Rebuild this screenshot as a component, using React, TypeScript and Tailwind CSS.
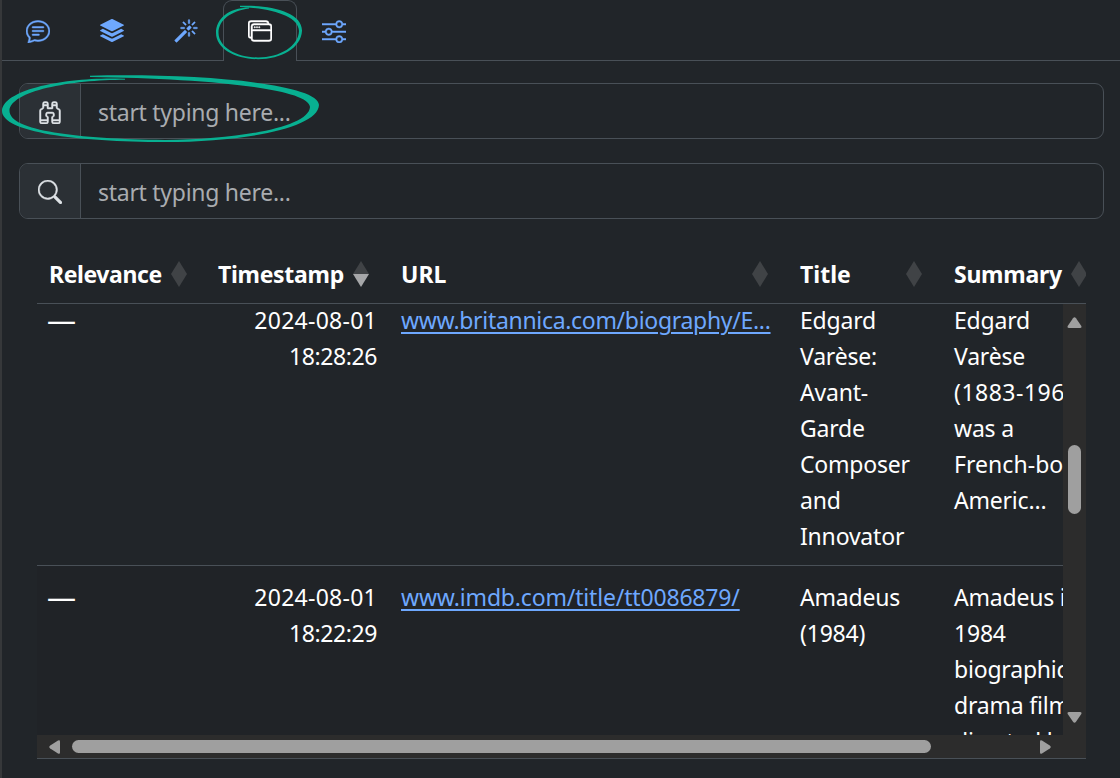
import type { ReactNode } from "react";
import { BsChatText, BsStack, BsMagic, BsWindowStack, BsSliders, BsBinoculars, BsSearch } from "react-icons/bs";

function Tab({ children, active = false }: { children: ReactNode; active?: boolean }) {
  return (
    <div
      className={
        active
          ? "flex h-[61px] w-[74px] items-center justify-center rounded-t-[9px] border border-b-0 border-[#495057] bg-[#212529] text-white"
          : "flex h-[62px] w-[74px] items-center justify-center text-[#6ea8fe]"
      }
    >
      {children}
    </div>
  );
}

function SearchField({ icon }: { icon: ReactNode }) {
  return (
    <div className="flex h-14 overflow-hidden rounded-[9px] border border-[#495057]">
      <div className="flex w-[61px] shrink-0 items-center justify-center border-r border-[#495057] bg-[#2b3035] pt-px text-[#dee2e6]">
        {icon}
      </div>
      <input
        className="min-w-0 flex-1 bg-transparent pl-[17px] pt-[3px] text-[23px] tracking-[-0.28px] outline-none placeholder:text-[#a9acb0]"
        placeholder="start typing here..."
      />
    </div>
  );
}

function SortMark({ desc = false }: { desc?: boolean }) {
  return (
    <svg width="16" height="26" viewBox="0 0 16 26" className="shrink-0">
      <path d="M8 0L16 13H0Z" fill="#404346" />
      <path d="M0 13H16L8 26Z" fill={desc ? "#a6a7a9" : "#404346"} />
    </svg>
  );
}

function Lines({ items }: { items: string[] }) {
  return (
    <>
      {items.map((t) => (
        <div
          key={t}
          className={
            t.startsWith("(1883")
              ? "whitespace-nowrap tracking-[0.5px]"
              : t.startsWith("French")
                ? "whitespace-nowrap tracking-[0.05px]"
                : "whitespace-nowrap"
          }
        >
          {t}
        </div>
      ))}
    </>
  );
}

interface RowData {
  date: string;
  time: string;
  url: string;
  title: string[];
  summary: string[];
}

const rows: RowData[] = [
  {
    date: "2024-08-01",
    time: "18:28:26",
    url: "www.britannica.com/biography/E...",
    title: ["Edgard", "Varèse:", "Avant-", "Garde", "Composer", "and", "Innovator"],
    summary: ["Edgard", "Varèse", "(1883-1965)", "was a", "French-born", "Americ..."],
  },
  {
    date: "2024-08-01",
    time: "18:22:29",
    url: "www.imdb.com/title/tt0086879/",
    title: ["Amadeus", "(1984)"],
    summary: ["Amadeus is a", "1984", "biographical", "drama film", "directed by"],
  },
];

function Row({ row, first }: { row: RowData; first: boolean }) {
  return (
    <div
      className={
        first
          ? "flex h-[262px] shrink-0 border-b border-[#495057]"
          : "flex h-[200px] shrink-0 bg-[#202327] pt-[15px]"
      }
    >
      <div className="-mt-0.5 w-[170px] shrink-0 pl-[10px] text-[29px] tracking-normal">—</div>
      <div className="-mt-0.5 w-[170px] shrink-0 text-right">
        <div className="tracking-[0.26px]">{row.date}</div>
        <div className="tracking-[-0.4px]">{row.time}</div>
      </div>
      <div className="-mt-0.5 w-[399px] shrink-0 whitespace-nowrap pl-6">
        <a
          className={
            first
              ? "tracking-[-0.31px] text-[#6ea8fe] underline decoration-2 underline-offset-[3px]"
              : "tracking-[-0.17px] text-[#6ea8fe] underline decoration-2 underline-offset-[3px]"
          }
        >
          {row.url}
        </a>
      </div>
      <div className="-mt-0.5 w-[154px] shrink-0 pl-6"><Lines items={row.title} /></div>
      <div className="-mt-0.5 w-[200px] shrink-0 pl-6"><Lines items={row.summary} /></div>
    </div>
  );
}

export default function App() {
  return (
    <div className="relative h-[778px] w-[1120px] overflow-hidden border-l-2 border-[#36383a] bg-[#212529] font-['Noto_Sans','Open_Sans',sans-serif] text-white">
      <div className="-ml-px flex h-[61px] border-b border-[#495057]">
        <Tab><BsChatText size={24} strokeWidth={0.3} /></Tab>
        <Tab><BsStack size={24} /></Tab>
        <Tab><BsMagic size={24} strokeWidth={0.3} /></Tab>
        <Tab active><BsWindowStack size={24} strokeWidth={0.3} /></Tab>
        <Tab><BsSliders size={24} strokeWidth={0.3} /></Tab>
      </div>

      <div className="flex flex-col gap-6 pl-[17px] pr-4 pt-[22px]">
        <SearchField icon={<BsBinoculars size={24} strokeWidth={0.3} />} />
        <SearchField icon={<BsSearch size={24} strokeWidth={0.3} />} />
      </div>

      <div className="ml-[35px] mt-[25px] w-[1049px] overflow-hidden">
        <div className="flex h-[60px] w-[1100px] items-center border-b border-[#495057] text-[23px] font-bold">
          <div className="flex w-[170px] items-center pl-3">
            <span className="w-[122px] pt-0.5 tracking-[-0.4px]">Relevance</span><SortMark />
          </div>
          <div className="flex w-[170px] items-center pl-[11px]">
            <span className="w-[135px] pt-0.5 tracking-[-0.3px]">Timestamp</span><SortMark desc />
          </div>
          <div className="flex w-[399px] items-center pl-6">
            <span className="w-[351px] pt-0.5">URL</span><SortMark />
          </div>
          <div className="flex w-[154px] items-center pl-6">
            <span className="w-[106px] pt-0.5">Title</span><SortMark />
          </div>
          <div className="flex items-center pl-6">
            <span className="w-[117px] pt-0.5 tracking-[-0.25px]">Summary</span><SortMark />
          </div>
        </div>
        <div className="flex h-[431px]">
          <div className="flex w-[1026px] flex-col overflow-hidden text-[23px] leading-9 tracking-[-0.2px]">
            {rows.map((r, i) => <Row key={r.url} row={r} first={i === 0} />)}
          </div>
          <div className="flex w-[23px] flex-col items-center bg-[#2c2c2c]">
            <svg width="15" height="11" viewBox="0 0 15 11" className="mt-[13px]">
              <path d="M6 1.200Q7.500-.7 9 1.200L14.300 9Q15 11 13 11H2Q0 11 .7 9Z" fill="#9f9f9f" />
            </svg>
            <div className="mt-[117px] h-[69px] w-[13px] rounded-full bg-[#9f9f9f]" />
            <svg width="15" height="11" viewBox="0 0 15 11" className="mt-[198px]">
              <path d="M6 9.800Q7.500 11.700 9 9.800L14.300 2Q15 0 13 0H2Q0 0 .7 2Z" fill="#9f9f9f" />
            </svg>
          </div>
        </div>
        <div className="flex h-6 items-center border-b border-[#495057] bg-[#2c2c2c] pl-3">
          <svg width="11" height="14" viewBox="0 0 11 14">
            <path d="M1.200 5.500Q-.7 7 1.200 8.500L9 13.500Q11 14.500 11 12.500V1.500Q11-.5 9 .5Z" fill="#9f9f9f" />
          </svg>
          <div className="ml-3 h-[13px] w-[859px] rounded-full bg-[#9f9f9f]" />
          <svg width="11" height="14" viewBox="0 0 11 14" className="ml-[109px]">
            <path d="M9.800 5.500Q11.700 7 9.800 8.500L2 13.500Q0 14.500 0 12.500V1.500Q0-.5 2 .5Z" fill="#9f9f9f" />
          </svg>
        </div>
      </div>

      <svg width="1120" height="160" viewBox="0 0 1120 160" className="pointer-events-none absolute -left-0.5 top-0" fill="#08b091">
        <path d="M240 5.800C268 4.800 302.500 11 302 31C301 48 281 59.200 258 59.200C236 59.200 216 49 216 33C216 19 228 8 249 7.500V8.500C231 11 218.500 20 218.500 33C219 48 238 57.500 258 57.500C280 57.500 298.500 46 299 31C298.500 16 272 8.500 240 7Z" />
        <path d="M90 75.800C193 73 319 83 319 105C318 128 245 142 165 142C76 142 2 132 2 111C3 89 68 76.500 125 78.800V79.800C71 79.800 10 91 9.500 111C10 131 77 138.700 165 140C240 139.500 309 127 310 107C309 88 203 78.500 90 77Z" />
      </svg>
    </div>
  );
}
